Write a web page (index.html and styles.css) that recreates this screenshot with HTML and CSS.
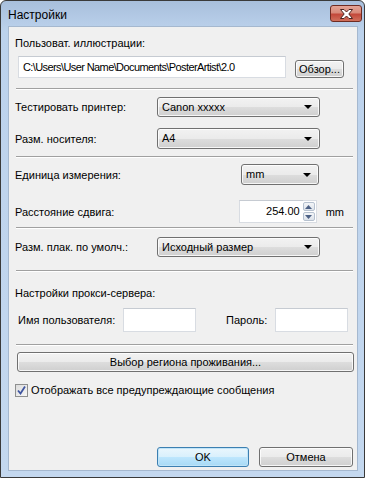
FILE: index.html
```html
<!DOCTYPE html>
<html lang="ru">
<head>
  <meta charset="UTF-8">
  <title>Настройки</title>
  <link rel="stylesheet" href="styles.css">
</head>
<body>
  <div class="window">
    <div class="titlebar">
      <span class="title">Настройки</span>
      <button class="close">
        <svg width="15" height="10" viewBox="0 0 15 10">
          <path d="M1.5 0.5 L5 0.5 L7.5 3 L10 0.5 L13.5 0.5 L9.8 5 L13.5 9.5 L10 9.5 L7.5 7 L5 9.5 L1.5 9.5 L5.2 5 Z" fill="#fff" stroke="#4a2420" stroke-width="1" stroke-linejoin="round"/>
        </svg>
      </button>
    </div>
    <div class="client">
      <div class="label first">Пользоват. иллюстрации:</div>
      <div class="row path-row">
        <div class="textbox path">C:\Users\User Name\Documents\PosterArtist\2.0</div>
        <button class="btn browse">Обзор...</button>
      </div>
      <div class="sep s1"></div>

      <div class="row r-printer">
        <span class="label">Тестировать принтер:</span>
        <div class="combo wide">Canon xxxxx<span class="arrow"></span></div>
      </div>
      <div class="row r-media">
        <span class="label">Разм. носителя:</span>
        <div class="combo wide tall">A4<span class="arrow"></span></div>
      </div>
      <div class="sep s2"></div>

      <div class="row r-unit">
        <span class="label">Единица измерения:</span>
        <div class="combo narrow">mm<span class="arrow"></span></div>
      </div>
      <div class="row r-shift">
        <span class="label">Расстояние сдвига:</span>
        <div class="spin">
          <div class="textbox num">254.00</div>
          <div class="spin-btns">
            <span class="sb up"><svg width="7" height="4" viewBox="0 0 7 4"><path d="M0 4 L3.5 0 L7 4 Z" fill="#4d6185"/></svg></span>
            <span class="sb down"><svg width="7" height="4" viewBox="0 0 7 4"><path d="M0 0 L3.5 4 L7 0 Z" fill="#4d6185"/></svg></span>
          </div>
        </div>
        <span class="unit">mm</span>
      </div>
      <div class="sep s3"></div>

      <div class="row r-poster">
        <span class="label">Разм. плак. по умолч.:</span>
        <div class="combo wide">Исходный размер<span class="arrow"></span></div>
      </div>
      <div class="sep s4"></div>

      <div class="label proxy">Настройки прокси-сервера:</div>
      <div class="row r-proxy">
        <span class="label user">Имя пользователя:</span>
        <div class="textbox small"></div>
        <span class="label pass">Пароль:</span>
        <div class="textbox small"></div>
      </div>
      <div class="sep s5"></div>

      <button class="btn region">Выбор региона проживания...</button>
      <div class="row r-check">
        <span class="checkbox">
          <svg width="9" height="9" viewBox="0 0 9 9"><path d="M1 4.5 L3.5 7.5 L8 0.5" fill="none" stroke="#3f55a0" stroke-width="1.8"/></svg>
        </span>
        <span class="label">Отображать все предупреждающие сообщения</span>
      </div>

      <div class="footer">
        <button class="btn ok">OK</button>
        <button class="btn cancel">Отмена</button>
      </div>
    </div>
  </div>
</body>
</html>
```

FILE: styles.css
```css
body {
  margin: 0;
  background: #fff;
  font-family: 'Liberation Sans', Arial, sans-serif;
  font-size: 11px;
  color: #000;
}
.window {
  width: 365px;
  height: 478px;
  box-sizing: border-box;
  border: 1px solid #3a3a3a;
  border-radius: 6px 6px 0 0;
  background: linear-gradient(#a8bfdc, #bcd2ec 30px, #c4d8ef);
  display: flex;
  flex-direction: column;
  overflow: hidden;
}
.titlebar {
  height: 25px;
  display: flex;
  align-items: flex-start;
  padding-left: 7px;
  flex-shrink: 0;
}
.title {
  margin-top: 7px;
  font-size: 12px;
  color: #000;
}
.close {
  margin-left: auto;
  margin-right: 2px;
  margin-top: 4px;
  width: 32px;
  height: 17px;
  padding: 0;
  border: 1px solid #6e2b22;
  border-radius: 3px;
  background: linear-gradient(#e4a496, #d88a7a 45%, #c3483a 55%, #d0705c);
  display: flex;
  align-items: center;
  justify-content: center;
}
.client {
  margin: 0 6px 6px 7px;
  flex: 1;
  background: #f0f0f0;
  border: 1px solid #a5b8cf;
  display: flex;
  flex-direction: column;
  padding: 0 4px 3px 6px;
}
.label {
  line-height: 16px;
  white-space: nowrap;
}
.first { margin-top: 8px; }
.row {
  display: flex;
  align-items: center;
}
.textbox {
  box-sizing: border-box;
  background: #fff;
  border: 1px solid #d8dce2;
  border-top-color: #c6cbd2;
}
.path-row { margin-top: 5px; }
.path {
  margin-left: 3px;
  width: 268px;
  height: 22px;
  line-height: 20px;
  padding-left: 4px;
  letter-spacing: -0.6px;
}
.btn {
  font-family: 'Liberation Sans', Arial, sans-serif;
  font-size: 11px;
  color: #000;
  box-sizing: border-box;
  border: 1px solid #707070;
  border-radius: 3px;
  background: linear-gradient(#f2f2f2, #ebebeb 50%, #dddddd 51%, #cfcfcf);
  box-shadow: inset 0 0 0 1px rgba(255, 255, 255, 0.8);
  padding: 0;
}
.browse {
  margin-left: 9px;
  margin-top: 3px;
  width: 49px;
  height: 18px;
}
.sep {
  margin-left: 1px;
  border-top: 1px solid #a0a0a0;
  border-bottom: 1px solid #fff;
}
.s1 { margin-top: 10px; }
.combo {
  position: relative;
  box-sizing: border-box;
  height: 20px;
  line-height: 18px;
  padding-left: 4px;
  border: 1px solid #707070;
  border-radius: 3px;
  background: linear-gradient(#f2f2f2, #ebebeb 50%, #dddddd 51%, #cfcfcf);
  box-shadow: inset 0 0 0 1px rgba(255, 255, 255, 0.8);
}
.combo .arrow {
  position: absolute;
  right: 7px;
  top: 7px;
  border-left: 4px solid transparent;
  border-right: 4px solid transparent;
  border-top: 4px solid #000;
}
.wide {
  margin-left: auto;
  margin-right: 33px;
  width: 163px;
}
.tall { height: 21px; line-height: 19px; }
.tall .arrow { top: 8px; }
.narrow {
  margin-left: auto;
  margin-right: 34px;
  width: 78px;
  height: 21px;
  line-height: 19px;
}
.narrow .arrow { top: 8px; }
.r-printer { margin-top: 7px; }
.r-media { margin-top: 11px; }
.s2 { margin-top: 7px; }
.r-unit { margin-top: 6px; }
.r-shift { margin-top: 15px; }
.spin {
  margin-left: auto;
  display: flex;
  height: 23px;
}
.num {
  width: 64px;
  height: 23px;
  line-height: 21px;
  text-align: right;
  padding-right: 3px;
  border-right: none;
}
.spin-btns {
  display: flex;
  flex-direction: column;
  width: 14px;
  background: #fff;
  border: 1px solid #d8dce2;
  border-left: none;
  box-sizing: border-box;
  padding: 1px 1px 1px 0;
  gap: 1px;
}
.sb {
  flex: 1;
  border: 1px solid #b6c1cf;
  border-radius: 2px;
  background: linear-gradient(#f3f5f8, #dde3ea);
  display: flex;
  align-items: center;
  justify-content: center;
}
.unit {
  margin-left: 9px;
  margin-right: 9px;
}
.s3 { margin-top: 4px; }
.r-poster { margin-top: 8px; }
.s4 { margin-top: 13px; }
.proxy { margin-top: 13px; }
.r-proxy { margin-top: 7px; }
.user {
  margin-left: 3px;
  width: 105px;
}
.small {
  width: 73px;
  height: 24px;
}
.pass {
  margin-left: 30px;
  width: 49px;
}
.s5 { margin-top: 12px; }
.region {
  margin-top: 6px;
  margin-left: 2px;
  margin-right: -1px;
  height: 20px;
}
.r-check { margin-top: 10px; }
.checkbox {
  box-sizing: border-box;
  width: 13px;
  height: 13px;
  border: 1px solid #8e8f8f;
  background: linear-gradient(135deg, #dcdcdc, #f6f6f6);
  display: flex;
  align-items: center;
  justify-content: center;
  margin-right: 3px;
}
.footer {
  margin-top: auto;
  display: flex;
  justify-content: flex-end;
  gap: 10px;
}
.footer .btn {
  height: 20px;
}
.ok {
  width: 92px;
  border-color: #3c7fb1;
  background: linear-gradient(#eaf6fd, #d9f0fc 50%, #bee6fd 51%, #a7d9f5);
  box-shadow: inset 0 0 0 1px #c0e4f8;
}
.cancel {
  width: 94px;
}
```
